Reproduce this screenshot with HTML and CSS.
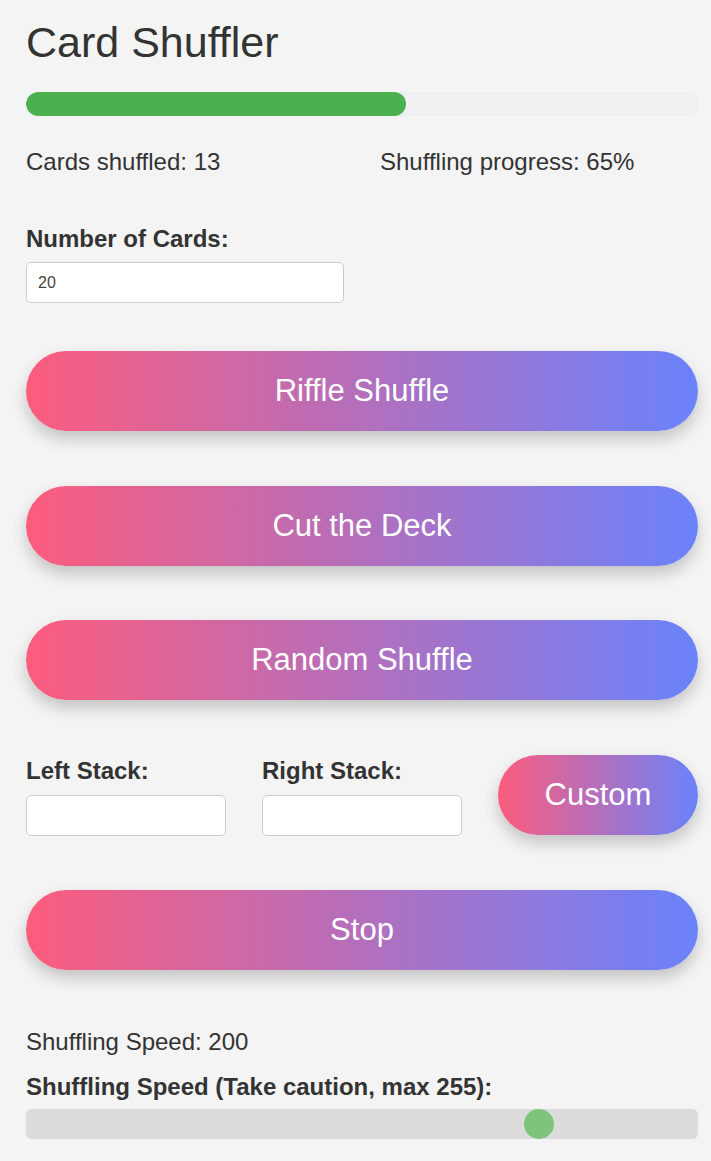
FILE: index.html
```html
<!DOCTYPE html>
<html lang="en">
<head>
<meta charset="utf-8">
<title>Card Shuffler</title>
<link rel="stylesheet" href="styles.css">
</head>
<body>
<main class="app">
  <h1 class="title">Card Shuffler</h1>
  <div class="progress"><div class="progress-fill" style="width: 56.5%"></div></div>
  <div class="stats">
    <span class="stat">Cards shuffled: 13</span>
    <span class="stat">Shuffling progress: 65%</span>
  </div>
  <div class="field">
    <label class="label" for="cards">Number of Cards:</label>
    <input class="input input-cards" id="cards" type="number" value="20">
  </div>
  <button class="btn btn-first">Riffle Shuffle</button>
  <button class="btn">Cut the Deck</button>
  <button class="btn">Random Shuffle</button>
  <div class="stack-row">
    <div class="stack-col">
      <label class="label" for="left">Left Stack:</label>
      <input class="input" id="left" type="text">
    </div>
    <div class="stack-col">
      <label class="label" for="right">Right Stack:</label>
      <input class="input" id="right" type="text">
    </div>
    <button class="btn btn-custom">Custom</button>
  </div>
  <button class="btn">Stop</button>
  <p class="speed-text">Shuffling Speed: 200</p>
  <label class="label label-speed" for="speed">Shuffling Speed (Take caution, max 255):</label>
  <input class="slider" id="speed" type="range" min="10" max="255" value="200">
</main>
</body>
</html>
```
FILE: styles.css
```css
* { box-sizing: border-box; }
html, body { margin: 0; padding: 0; }
body {
  background: #f4f4f4;
  color: #333;
  font-family: "Liberation Sans", Arial, sans-serif;
  font-size: 24px;
  line-height: 1.2;
}
.app {
  padding: 17px 13px 0 26px;
  width: 711px;
  display: flex;
  flex-direction: column;
}
.title {
  margin: 0;
  font-size: 43px;
  font-weight: normal;
  line-height: 1.2;
  color: #333;
}
.progress {
  margin-top: 23px;
  height: 24px;
  border-radius: 12px;
  background: #f1f1f1;
  box-shadow: inset 0 0 2px rgba(0,0,0,0.08);
  overflow: hidden;
}
.progress-fill {
  height: 100%;
  background: #4caf50;
  border-radius: 12px;
}
.stats {
  margin-top: 32px;
  display: grid;
  grid-template-columns: 1fr 1fr;
  column-gap: 36px;
}
.stat { line-height: 28.8px; }
.field {
  margin-top: 49px;
  display: flex;
  flex-direction: column;
  align-items: flex-start;
}
.label {
  font-weight: bold;
  line-height: 28.8px;
  display: block;
}
.input {
  margin-top: 8px;
  height: 41px;
  border: 1px solid #ccc;
  border-radius: 5px;
  background: #fff;
  padding: 0 11px;
  font-family: "Liberation Sans", Arial, sans-serif;
  font-size: 16px;
  color: #444;
  width: 100%;
}
.input-cards { width: 318px; }
.input-cards::-webkit-outer-spin-button,
.input-cards::-webkit-inner-spin-button { -webkit-appearance: none; margin: 0; }
.btn {
  display: block;
  width: 100%;
  height: 80px;
  border: none;
  border-radius: 40px;
  background: linear-gradient(to right, #fc5c7d, #6a82fb);
  color: #fff;
  font-family: "Liberation Sans", Arial, sans-serif;
  font-size: 31px;
  box-shadow: 0 8px 16px rgba(0,0,0,0.2);
  margin-top: 54.5px;
  padding: 0;
}
.btn-first { margin-top: 48px; }
.stack-row {
  margin-top: 55px;
  display: grid;
  grid-template-columns: 200px 200px 200px;
  column-gap: 36px;
  align-items: end;
}
.stack-col {
  display: flex;
  flex-direction: column;
  margin-bottom: -1px;
}
.stack-col .input { margin-top: 9px; }
.btn-custom { margin-top: 0; }
.speed-text {
  margin: 58px 0 0;
  line-height: 28.8px;
}
.label-speed { margin-top: 17px; }
.slider {
  -webkit-appearance: none;
  appearance: none;
  margin: 7px 0 0;
  width: 100%;
  height: 30px;
  border-radius: 6px;
  background: #dcdcdc;
  outline: none;
  box-shadow: inset 0 0 1px rgba(0,0,0,0.1);
}
.slider::-webkit-slider-thumb {
  -webkit-appearance: none;
  appearance: none;
  width: 30px;
  height: 30px;
  border-radius: 50%;
  background: #7dc47d;
  border: none;
}
```
